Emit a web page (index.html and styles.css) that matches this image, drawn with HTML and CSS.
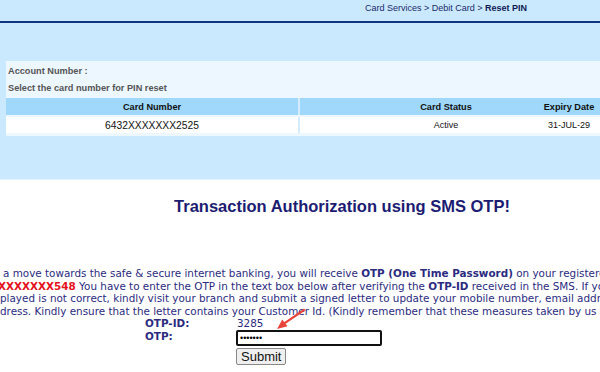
FILE: index.html
```html
<!DOCTYPE html>
<html>
<head>
<meta charset="utf-8">
<link rel="stylesheet" href="styles.css">
</head>
<body>
<div class="top">
  <div class="crumbs">Card Services &gt; Debit Card &gt; <b>Reset PIN</b></div>
  <div class="rule"></div>
  <div class="panel">
    <div class="label">Account Number :</div>
    <div class="label">Select the card number for PIN reset</div>
    <table class="cards">
      <tr class="head"><th class="c1">Card Number</th><th class="c2">Card Status</th><th class="c3">Expiry Date</th></tr>
      <tr class="row"><td class="c1 num">6432XXXXXXX2525</td><td class="c2">Active</td><td class="c3">31-JUL-29</td></tr>
    </table>
  </div>
</div>
<h1 class="title">Transaction Authorization using SMS OTP!</h1>
<div class="para">
  <div class="line l1">a move towards the safe &amp; secure internet banking, you will receive <b>OTP (One Time Password)</b> on your registered</div>
  <div class="line l2"><b class="red">XXXXXXX548</b> You have to enter the OTP in the text box below after verifying the <b>OTP-ID</b> received in the SMS. If you</div>
  <div class="line l3">played is not correct, kindly visit your branch and submit a signed letter to update your mobile number, email address</div>
  <div class="line l4">dress. Kindly ensure that the letter contains your Customer Id. (Kindly remember that these measures taken by us are</div>
</div>
<div class="otp">
  <div class="k">OTP-ID:</div><div class="v">3285</div>
  <div class="k">OTP:</div><div class="v"><input class="inp" type="password" value="1234567"></div>
  <div></div><div class="v"><button class="btn">Submit</button></div>
</div>
<svg class="arrow" width="36" height="28" viewBox="0 0 36 28">
  <line x1="30" y1="5" x2="11" y2="17.9" stroke="#e8453c" stroke-width="2.2" stroke-linecap="round"/>
  <path d="M3 24 L13.5 21.3 L8.3 14.5 Z" fill="#e8453c"/>
</svg>
</body>
</html>
```
FILE: styles.css
```css
html, body { margin: 0; padding: 0; }
body { width: 600px; height: 372px; overflow: hidden; background: #fff; position: relative; font-family: "DejaVu Sans", Verdana, sans-serif; }
.top { background: #cbe9fe; height: 179px; border-bottom: 1px solid #e2f2fe; font-family: "Liberation Sans", Arial, sans-serif; }
.crumbs { height: 20px; box-sizing: border-box; padding: 2px 73px 0 0; text-align: right; font-size: 9px; color: #202a6a; line-height: 12px; }
.crumbs b { color: #101a55; }
.rule { height: 2px; background: #10357f; margin-top: 1px; }
.panel { margin: 38px 0 0 6px; background: #edf7ff; padding: 2px 0 1px 0; }
.label { font-size: 9.2px; font-weight: bold; color: #555; line-height: 17px; padding-left: 2px; }
.cards { border-collapse: separate; border-spacing: 0 2px; margin-top: -1px; width: 606px; font-size: 9.2px; }
.cards th, .cards td { padding: 0; text-align: center; }
.cards .head th { background: #9fd8fb; height: 17px; color: #111; }
.cards .row td { background: #fff; height: 16px; color: #111; font-size: 9px; }
.cards .row .num { font-size: 10.3px; }
.cards .c1 { width: 292px; border-right: 2px solid #d4ecfd; }
.cards .c2 { width: 160px; padding-left: 66px; }
.cards .c3 { width: 86px; }
.title { margin: 16px 0 0 0; text-align: center; padding-left: 84px; font-family: "Liberation Sans", Arial, sans-serif; font-size: 16.5px; font-weight: bold; color: #1c1c72; line-height: 20px; }
.para { margin-top: 51px; }
.line { white-space: nowrap; font-size: 10.4px; line-height: 12.5px; color: #2b2b80; }
.l1 { padding-left: 3px; }
.l2 { margin-left: -2px; }
.red { color: #e5121b; }
.otp { display: grid; grid-template-columns: 92px auto; grid-template-rows: 12.5px 12.5px auto; margin-left: 145px; font-size: 10.4px; color: #2b2b80; line-height: 12.5px; }
.k { font-weight: bold; }
.inp { display: block; width: 146px; height: 16px; box-sizing: border-box; border: 2px solid #111; border-radius: 2px; padding: 0 2px; font-size: 9px; margin: 0 0 0 -1px; }
.btn { display: block; margin: 5.5px 0 0 -1px; height: 17px; padding: 0 4px; font-family: "Liberation Sans", Arial, sans-serif; font-size: 13px; border: 1px solid #888; border-radius: 2px; background: #efefef; color: #111; line-height: 15px; }
.arrow { position: absolute; left: 274px; top: 305px; }
```
